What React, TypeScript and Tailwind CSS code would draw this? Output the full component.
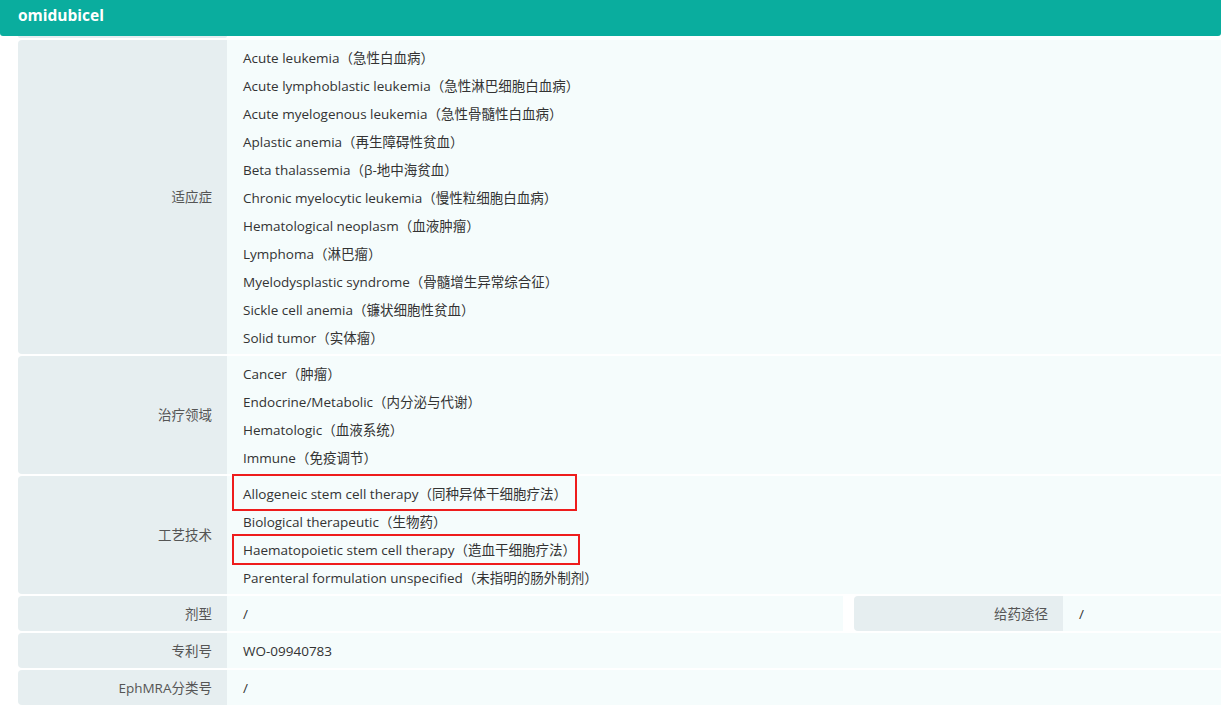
import React from "react";

const font = { fontFamily: '"Open Sans","Noto Sans CJK SC",sans-serif' };

function Label({ children }: { children: React.ReactNode }) {
  return (
    <div className="w-[209px] shrink-0 bg-[#e6eef0] rounded-l-[4px] flex items-center justify-end pr-[15px] pt-[1px] text-[13.5px] text-[#555]">
      {children}
    </div>
  );
}

function List({ items }: { items: string[] }) {
  return (
    <div className="pt-[4px] pb-[2px]">
      {items.map((t) => (
        <div key={t} className="h-[28px] leading-[28px] text-[13.5px] text-[#333] whitespace-nowrap">
          {t}
        </div>
      ))}
    </div>
  );
}

export default function App() {
  const indications = [
    "Acute leukemia（急性白血病）",
    "Acute lymphoblastic leukemia（急性淋巴细胞白血病）",
    "Acute myelogenous leukemia（急性骨髓性白血病）",
    "Aplastic anemia（再生障碍性贫血）",
    "Beta thalassemia（β-地中海贫血）",
    "Chronic myelocytic leukemia（慢性粒细胞白血病）",
    "Hematological neoplasm（血液肿瘤）",
    "Lymphoma（淋巴瘤）",
    "Myelodysplastic syndrome（骨髓增生异常综合征）",
    "Sickle cell anemia（镰状细胞性贫血）",
    "Solid tumor（实体瘤）",
  ];
  const areas = [
    "Cancer（肿瘤）",
    "Endocrine/Metabolic（内分泌与代谢）",
    "Hematologic（血液系统）",
    "Immune（免疫调节）",
  ];
  const tech = [
    "Allogeneic stem cell therapy（同种异体干细胞疗法）",
    "Biological therapeutic（生物药）",
    "Haematopoietic stem cell therapy（造血干细胞疗法）",
    "Parenteral formulation unspecified（未指明的肠外制剂）",
  ];
  const valueCls = "flex-1 bg-[#f5fcfc] pl-[16px] pt-[1px] flex items-center text-[13.5px] text-[#333]";
  return (
    <div className="w-[1221px] h-[712px] overflow-hidden bg-white" style={font}>
      <div className="h-[36px] bg-[#0aad9e] rounded-b-[3px] flex items-center pl-[18px] pb-[4px]">
        <span className="text-white font-bold text-[15.5px]">omidubicel</span>
      </div>
      <div className="ml-[18px] h-[2px] w-[209px] bg-[#e6eef0] rounded-b-[3px]" />
      <div className="mt-[2px] ml-[18px] flex flex-col gap-[2px]">
        <div className="flex">
          <Label>适应症</Label>
          <div className="flex-1 bg-[#f5fcfc] pl-[16px]">
            <List items={indications} />
          </div>
        </div>
        <div className="flex">
          <Label>治疗领域</Label>
          <div className="flex-1 bg-[#f5fcfc] pl-[16px]">
            <List items={areas} />
          </div>
        </div>
        <div className="flex">
          <Label>工艺技术</Label>
          <div className="flex-1 bg-[#f5fcfc] pl-[16px] relative">
            <List items={tech} />
            <div className="absolute left-[5px] top-[-2px] w-[345px] h-[37px] border-2 border-[#ee1c1c]" />
            <div className="absolute left-[5px] top-[58px] w-[348px] h-[31px] border-2 border-[#ee1c1c]" />
          </div>
        </div>
        <div className="flex h-[35px]">
          <div className="flex w-[825px] shrink-0">
            <Label>剂型</Label>
            <div className={valueCls}>/</div>
          </div>
          <div className="w-[11px] shrink-0" />
          <div className="flex flex-1">
            <Label>给药途径</Label>
            <div className={valueCls}>/</div>
          </div>
        </div>
        <div className="flex h-[35px]">
          <Label>专利号</Label>
          <div className={valueCls}>WO-09940783</div>
        </div>
        <div className="flex h-[35px]">
          <Label>EphMRA分类号</Label>
          <div className={valueCls}>/</div>
        </div>
      </div>
    </div>
  );
}
